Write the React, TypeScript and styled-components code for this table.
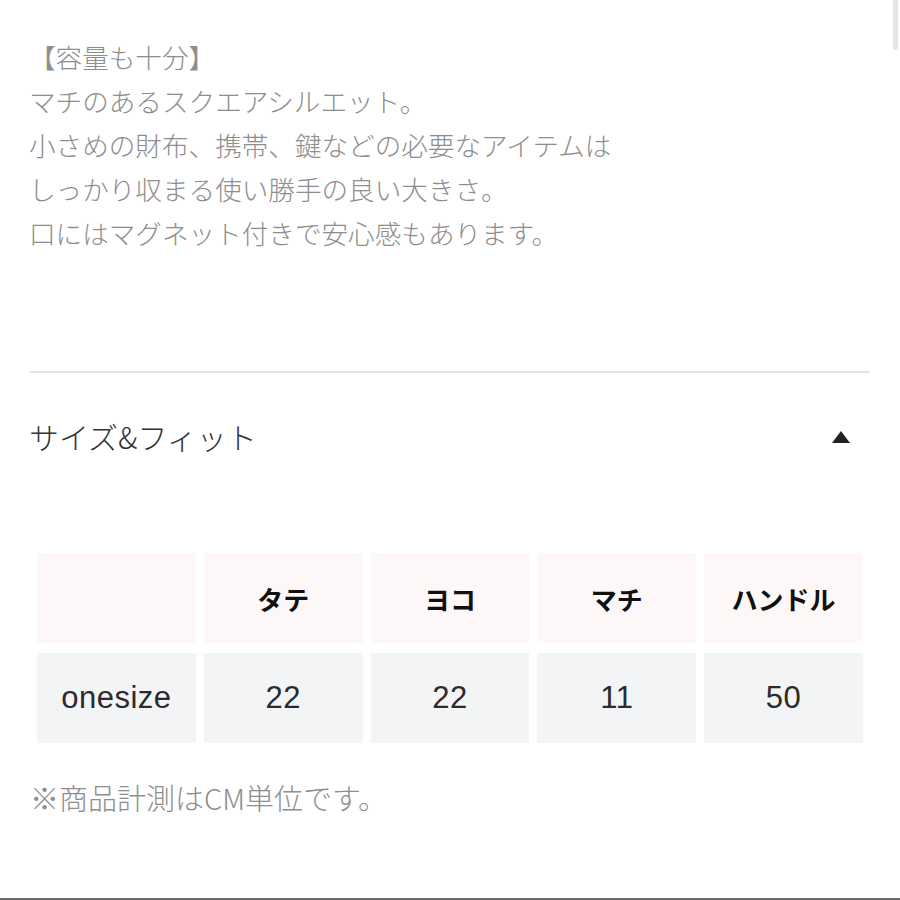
import React from "react";
import styled, { createGlobalStyle } from "styled-components";

const Global = createGlobalStyle`
  html, body { margin: 0; padding: 0; background: #ffffff; }
  body { font-family: "Noto Sans CJK JP", "Noto Sans", sans-serif; overflow: hidden; }
`;

const Page = styled.div`
  position: relative;
  box-sizing: border-box;
  height: 900px;
  padding: 35px 30px 0;
  display: flex;
  flex-direction: column;
  border-bottom: 2px solid #6a6a6a;
`;

const Description = styled.div`
  font-family: "Noto Sans CJK JP", sans-serif;
  font-weight: 300;
  font-size: 26.6px;
  line-height: 44px;
  color: #8e8e8e;
  margin-left: -1px;
`;

const Line = styled.div`
  white-space: nowrap;
`;

const Divider = styled.hr`
  margin: 116px 0 0;
  border: none;
  height: 2px;
  background: #e3e3e3;
`;

const AccordionHead = styled.div`
  display: flex;
  align-items: center;
  justify-content: space-between;
  height: 128px;
  padding-right: 20px;
`;

const AccordionTitle = styled.div`
  font-family: "Noto Sans CJK JP", sans-serif;
  font-weight: 300;
  font-size: 30px;
  color: #333333;
  margin-top: -3px;
  margin-left: -1px;
`;

const Caret = styled.span`
  width: 0;
  height: 0;
  border-left: 9px solid transparent;
  border-right: 9px solid transparent;
  border-bottom: 12px solid #222222;
`;

const Table = styled.div`
  margin: 52px 7px 0;
  display: grid;
  grid-template-columns: repeat(5, 1fr);
  grid-auto-rows: 90px;
  column-gap: 8px;
  row-gap: 10px;
`;

const Cell = styled.div<{ $head?: boolean }>`
  display: flex;
  align-items: center;
  justify-content: center;
  background: ${(p) => (p.$head ? "#fdf8f7" : "#f3f4f5")};
  color: ${(p) => (p.$head ? "#111111" : "#2b2b2b")};
  font-family: ${(p) =>
    p.$head
      ? '"Noto Sans CJK JP", sans-serif'
      : '"Liberation Sans", "Noto Sans CJK JP", sans-serif'};
  font-weight: ${(p) => (p.$head ? 700 : 400)};
  font-size: ${(p) => (p.$head ? "26px" : "31px")};
  letter-spacing: ${(p) => (p.$head ? "0" : "0.5px")};
`;

const Note = styled.div`
  margin-top: 32px;
  font-family: "Noto Sans CJK JP", sans-serif;
  font-weight: 300;
  font-size: 29px;
  line-height: 44px;
  color: #8e8e8e;
`;

const ScrollThumb = styled.div`
  position: absolute;
  top: 0;
  right: 2px;
  width: 5px;
  height: 50px;
  border-radius: 0 0 3px 3px;
  background: #e6e6e6;
`;

const heads = ["", "タテ", "ヨコ", "マチ", "ハンドル"];
const values = ["onesize", "22", "22", "11", "50"];

export default function App() {
  return (
    <>
      <Global />
      <Page>
        <ScrollThumb />
        <Description>
          <Line>【容量も十分】</Line>
          <Line>マチのあるスクエアシルエット。</Line>
          <Line>小さめの財布、携帯、鍵などの必要なアイテムは</Line>
          <Line>しっかり収まる使い勝手の良い大きさ。</Line>
          <Line>口にはマグネット付きで安心感もあります。</Line>
        </Description>
        <Divider />
        <AccordionHead>
          <AccordionTitle>サイズ&amp;フィット</AccordionTitle>
          <Caret />
        </AccordionHead>
        <Table>
          {heads.map((h, i) => (
            <Cell key={"h" + i} $head>
              {h}
            </Cell>
          ))}
          {values.map((v, i) => (
            <Cell key={"v" + i}>{v}</Cell>
          ))}
        </Table>
        <Note>※商品計測はCM単位です。</Note>
      </Page>
    </>
  );
}
